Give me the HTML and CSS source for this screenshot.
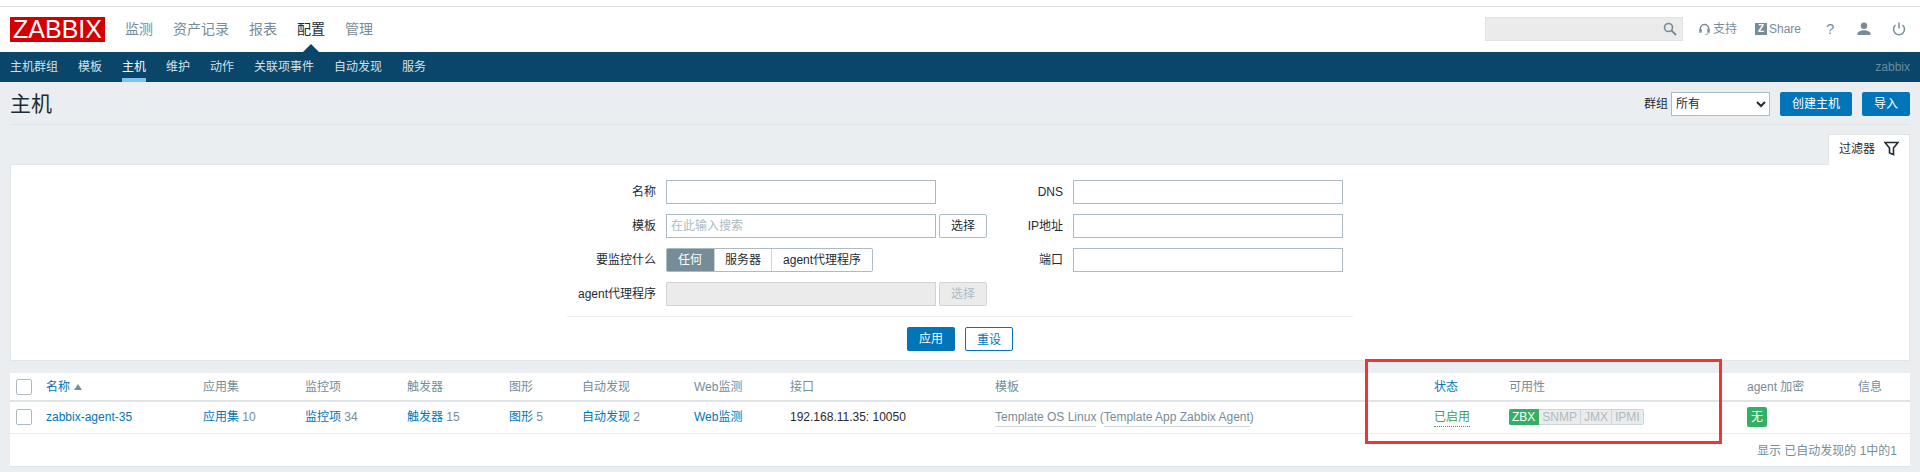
FILE: index.html
```html
<!DOCTYPE html>
<html lang="zh">
<head>
<meta charset="utf-8">
<title>主机</title>
<link rel="stylesheet" href="styles.css">
</head>
<body>
<header class="topbar">
  <div class="logo">ZABBIX</div>
  <nav class="mainnav">
    <a href="#">监测</a><a href="#">资产记录</a><a href="#">报表</a><a href="#" class="on">配置</a><a href="#">管理</a>
  </nav>
  <div class="search">
    <svg class="i-search" viewBox="0 0 14 14" width="14" height="14"><circle cx="5.5" cy="5.5" r="4" fill="none" stroke="#768d99" stroke-width="1.6"/><path d="M8.6 8.6L13 13" stroke="#768d99" stroke-width="2"/></svg>
  </div>
  <a href="#" class="ulink support">
    <svg viewBox="0 0 12 14" width="11" height="13"><path d="M1.5 9V6a4.5 4.5 0 0 1 9 0v3" fill="none" stroke="#768d99" stroke-width="1.6"/><rect x="0.3" y="6.5" width="2.6" height="4" fill="#768d99"/><rect x="9.1" y="6.5" width="2.6" height="4" fill="#768d99"/><path d="M10 10.5c0 1.5-1.5 2-3 2" fill="none" stroke="#768d99" stroke-width="1"/></svg>
    <span>支持</span>
  </a>
  <a href="#" class="ulink share"><span class="zbox">Z</span><span>Share</span></a>
  <a href="#" class="uicon help">?</a>
  <a href="#" class="uicon user">
    <svg viewBox="0 0 14 14" width="14" height="14"><circle cx="7" cy="3.8" r="3.2" fill="#768d99"/><path d="M0.5 13v-1.5C0.5 9.5 4 8.2 7 8.2s6.500 1.300 6.500 3.300V13z" fill="#768d99"/></svg>
  </a>
  <a href="#" class="uicon power">
    <svg viewBox="0 0 14 14" width="14" height="14"><path d="M3.500 3a5.500 5.500 0 1 0 7 0" fill="none" stroke="#768d99" stroke-width="1.500"/><path d="M7 0.500v6" stroke="#768d99" stroke-width="1.500"/></svg>
  </a>
</header>

<nav class="subnav">
  <a href="#">主机群组</a><a href="#">模板</a><a href="#" class="on">主机</a><a href="#">维护</a><a href="#">动作</a><a href="#">关联项事件</a><a href="#">自动发现</a><a href="#">服务</a>
  <span class="server">zabbix</span>
</nav>

<main class="page">
  <div class="titlebar">
    <h1>主机</h1>
    <div class="controls">
      <label class="grp">群组</label>
      <select class="grpsel"><option>所有</option></select>
      <button class="btn wide">创建主机</button>
      <button class="btn">导入</button>
    </div>
  </div>

  <div class="tabs">
    <div class="tab">过滤器
      <svg viewBox="0 0 15 15" width="15" height="15"><path d="M1 1.500h13L9.500 7v6.500l-4-1.500V7z" fill="none" stroke="#1f2c33" stroke-width="1.600"/></svg>
    </div>
  </div>

  <section class="filter">
    <form class="fform">
      <label>名称</label>
      <div class="field"><input class="txt" type="text"></div>
      <label>DNS</label>
      <input class="txt" type="text">

      <label>模板</label>
      <div class="field"><input class="txt" type="text" placeholder="在此输入搜索"><button type="button" class="sel">选择</button></div>
      <label>IP地址</label>
      <input class="txt" type="text">

      <label>要监控什么</label>
      <div class="field seg"><span class="on">任何</span><span>服务器</span><span>agent代理程序</span></div>
      <label>端口</label>
      <input class="txt" type="text">

      <label>agent代理程序</label>
      <div class="field"><input class="txt off" type="text" disabled><button type="button" class="sel dis" disabled>选择</button></div>
    </form>
    <div class="factions">
      <button type="button" class="btn act">应用</button>
      <button type="button" class="btn alt">重设</button>
    </div>
  </section>

  <section class="hosts">
    <table>
      <thead>
        <tr>
          <th class="c0"><span class="check"></span></th>
          <th class="c1"><a href="#">名称</a><span class="arrow"></span></th>
          <th class="c2">应用集</th>
          <th class="c2">监控项</th>
          <th class="c2">触发器</th>
          <th class="c3">图形</th>
          <th class="c4">自动发现</th>
          <th class="c5">Web监测</th>
          <th class="c6">接口</th>
          <th class="c7">模板</th>
          <th class="c8"><a href="#">状态</a></th>
          <th class="c9">可用性</th>
          <th class="c10">agent 加密</th>
          <th>信息</th>
        </tr>
      </thead>
      <tbody>
        <tr>
          <td><span class="check"></span></td>
          <td><a href="#">zabbix-agent-35</a></td>
          <td><a href="#">应用集</a> <span class="n">10</span></td>
          <td><a href="#">监控项</a> <span class="n">34</span></td>
          <td><a href="#">触发器</a> <span class="n">15</span></td>
          <td><a href="#">图形</a> <span class="n">5</span></td>
          <td><a href="#">自动发现</a> <span class="n">2</span></td>
          <td><a href="#">Web监测</a></td>
          <td class="iface">192.168.11.35: 10050</td>
          <td class="tpl"><a href="#">Template OS Linux</a> (<a href="#">Template App Zabbix Agent</a>)</td>
          <td><a href="#" class="enabled">已启用</a></td>
          <td><span class="avail"><b class="zbx">ZBX</b><b>SNMP</b><b>JMX</b><b>IPMI</b></span></td>
          <td><span class="enc">无</span></td>
          <td></td>
        </tr>
      </tbody>
    </table>
    <div class="paging">显示 已自动发现的 1中的1</div>
  </section>
</main>
<div class="redbox"></div>
</body>
</html>
```

FILE: styles.css
```css
* { box-sizing: border-box; }
html, body { margin: 0; height: 472px; overflow: hidden; }
body {
  position: relative;
  background: #ebeef0;
  color: #1f2c33;
  font: 12px/14px "Liberation Sans", "Noto Sans CJK SC", sans-serif;
}
a { color: inherit; text-decoration: none; }

.topbar {
  height: 52px;
  padding: 0 14px 0 10px;
  background: linear-gradient(#fff 6px, #dddfe0 6px, #dddfe0 7px, #fff 7px);
  display: flex;
  align-items: flex-start;
}
.logo {
  width: 95px; height: 25px; margin-top: 17px;
  background: #d40000; color: #fff;
  font-size: 25px; line-height: 25px; text-align: center;
}
.mainnav { display: flex; gap: 20px; margin-left: 20px; margin-top: 21px; font-size: 14px; line-height: 16px; color: #768d99; flex: 1; }
.mainnav a { position: relative; }
.mainnav .on { color: #1f2c33; }
.mainnav .on::after {
  content: ""; position: absolute; left: 6px; top: 23px;
  border: 8px solid transparent; border-top: 0; border-bottom-color: #0a466a;
}
.search {
  width: 198px; height: 24px; margin-top: 17px;
  background: #ebebeb; border: 1px solid #dfe4e7;
  display: flex; align-items: center; justify-content: flex-end; padding-right: 5px;
}
.ulink { display: flex; align-items: center; color: #768d99; margin-top: 21px; height: 16px; }
.support { margin-left: 16px; gap: 3px; }
.share { margin-left: 18px; gap: 2px; }
.zbox { width: 12px; height: 12px; background: #768d99; color: #fff; font-weight: bold; font-size: 10px; line-height: 12px; text-align: center; }
.uicon { color: #768d99; margin-top: 21px; height: 16px; display: flex; align-items: center; }
.help { font-size: 15px; margin-left: 25px; width: 8px; }
.user { margin-left: 23px; }
.power { margin-left: 21px; }

.subnav {
  height: 30px; background: #0a466a; color: #d2e0e8;
  display: flex; gap: 20px; padding: 0 10px; align-items: stretch; line-height: 30px;
}
.subnav a { height: 30px; }
.subnav .on { color: #fff; border-bottom: 4px solid #7cc4ee; }
.server { margin-left: auto; color: #6a8a9c; }

.page { padding: 0 10px; }
.titlebar {
  height: 43px; border-bottom: 1px solid #dfe4e7;
  display: flex; justify-content: space-between; align-items: flex-start;
}
h1 { margin: 10px 0 0; font-size: 21px; line-height: 24px; font-weight: normal; }
.controls { display: flex; align-items: center; margin-top: 10px; }
.grp { margin-right: 3px; }
.grpsel {
  width: 99px; height: 24px; background: #fff; color: #1f2c33;
  border: 1px solid #acbbc2; font: inherit; margin-right: 10px;
}
.btn {
  height: 24px; padding: 0; width: 48px; border: 0; border-radius: 2px;
  background: #0275b8; color: #fff; font: inherit; line-height: 24px;
}
.controls .wide { width: 72px; margin-right: 10px; }

.tabs { display: flex; justify-content: flex-end; padding-top: 9px; }
.tab {
  width: 82px; height: 31px; background: #fff;
  border: 1px solid #dfe4e7; border-bottom: 0; margin-bottom: -1px; position: relative;
  display: flex; align-items: center; gap: 9px; padding: 0 0 3px 10px;
}
.filter { height: 197px; background: #fff; border: 1px solid #dfe4e7; padding-top: 15px; }
.fform {
  width: 786px; margin: 0 auto; height: 136px;
  display: grid; grid-template-columns: 89px 321px 66px 270px; grid-auto-rows: 24px;
  gap: 10px; border-bottom: 1px solid #ebeef0; align-content: start; box-sizing: content-box;
}
.fform label { text-align: right; line-height: 24px; }
.field { display: flex; gap: 3px; }
.txt { width: 270px; height: 24px; border: 1px solid #acbbc2; background: #fff; padding: 0 4px; font: inherit; color: #1f2c33; }
.txt::placeholder { color: #acbbc2; }
.txt.off { background: #ebebeb; border-color: #cdd5d9; }
.sel { width: 48px; height: 24px; padding: 0; border: 1px solid #acbbc2; border-radius: 2px; background: #fff; color: #1f2c33; font: inherit; }
.sel.dis { background: #ebebeb; color: #acbbc2; border-color: #cdd5d9; }
.seg { gap: 0; height: 24px; width: 207px; border: 1px solid #acbbc2; border-radius: 2px; }
.seg span { padding: 0 10px; line-height: 22px; border-left: 1px solid #cfd7db; white-space: nowrap; }
.seg span:first-child { border-left: 0; padding: 0 12px 0 11px; }
.seg span:last-child { padding: 0 11px; }
.seg .on { background: #768d99; color: #fff; }
.factions { display: flex; justify-content: center; gap: 10px; margin-top: 10px; }
.btn.alt { background: #fff; color: #0275b8; border: 1px solid #0275b8; }

.hosts { height: 94px; margin-top: 12px; background: #fff; border-bottom: 1px solid #dfe4e7; }
table { width: 100%; border-collapse: collapse; table-layout: fixed; }
th { height: 28px; font-weight: normal; text-align: left; color: #768d99; padding: 0; border-bottom: 2px solid #dfe4e7; }
td { height: 32px; padding: 0; border-bottom: 1px solid #ebeef0; }
.c0 { width: 36px; } .c1 { width: 157px; } .c2 { width: 102px; } .c3 { width: 73px; }
.c4 { width: 112px; } .c5 { width: 96px; } .c6 { width: 205px; } .c7 { width: 439px; }
.c8 { width: 75px; } .c9 { width: 238px; } .c10 { width: 111px; }
th a, td a { color: #0275b8; }
.check { display: block; width: 16px; height: 16px; margin-left: 6px; border: 1px solid #acbbc2; border-radius: 2px; background: #fff; }
.arrow { display: inline-block; margin-left: 4px; border: 4px solid transparent; border-top: 0; border-bottom: 6px solid #768d99; vertical-align: 1px; }
.n { color: #768d99; }
.iface { color: #1f2c33; }
.tpl { color: #768d99; }
.tpl a { color: #768d99; border-bottom: 1px solid #cdd5d9; padding-bottom: 2px; }
td a.enabled { color: #429e47; border-bottom: 1px dotted #429e47; padding-bottom: 2px; }
.avail { display: inline-flex; height: 16px; border-radius: 2px; vertical-align: middle; }
.avail b { font-weight: normal; line-height: 14px; padding: 0 3px; background: #ebebeb; color: #acbbc2; border: 1px solid #cdd5d9; border-left: 0; }
.avail b:last-child { border-radius: 0 2px 2px 0; }
.avail .zbx { background: #34af67; color: #fff; border-color: #34af67; border-radius: 2px 0 0 2px; }
.enc { display: inline-block; width: 20px; height: 20px; line-height: 20px; text-align: center; background: #34af67; color: #fff; border-radius: 2px; }
.paging { text-align: right; padding: 10px 13px 0 0; color: #768d99; }

.redbox { position: absolute; left: 1365px; top: 359px; width: 357px; height: 85px; border: 3px solid #f33333; pointer-events: none; }
```
